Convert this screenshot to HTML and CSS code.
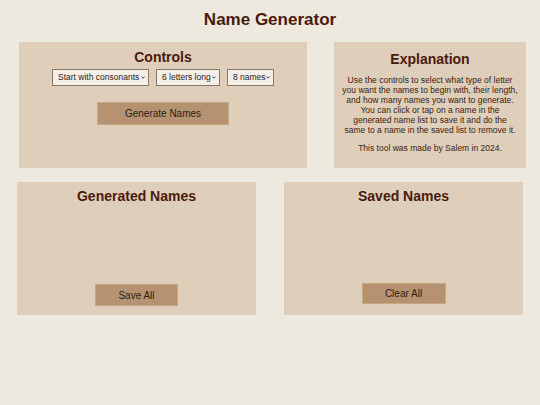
FILE: index.html
```html
<!DOCTYPE html>
<html lang="en">
<head>
<meta charset="utf-8">
<title>Name Generator</title>
<link rel="stylesheet" href="styles.css">
</head>
<body>
<h1 class="title">Name Generator</h1>
<div class="top-row">
  <section class="panel controls">
    <h2 class="panel-heading">Controls</h2>
    <div class="selects">
      <span class="sel-wrap">
        <select class="sel sel-type">
          <option>Start with consonants</option>
          <option>Start with vowels</option>
        </select>
        <svg class="chev" viewBox="0 0 4 3" aria-hidden="true"><path d="M0.4 0.5 L2 2.2 L3.6 0.5" fill="none" stroke="#3a2a1e" stroke-width="0.9"/></svg>
      </span>
      <span class="sel-wrap">
        <select class="sel sel-len">
          <option>6 letters long</option>
        </select>
        <svg class="chev" viewBox="0 0 4 3" aria-hidden="true"><path d="M0.4 0.5 L2 2.2 L3.6 0.5" fill="none" stroke="#3a2a1e" stroke-width="0.9"/></svg>
      </span>
      <span class="sel-wrap">
        <select class="sel sel-count">
          <option>8 names</option>
        </select>
        <svg class="chev" viewBox="0 0 4 3" aria-hidden="true"><path d="M0.4 0.5 L2 2.2 L3.6 0.5" fill="none" stroke="#3a2a1e" stroke-width="0.9"/></svg>
      </span>
    </div>
    <button class="btn btn-generate">Generate Names</button>
  </section>
  <section class="panel explanation">
    <h2 class="panel-heading expl-heading">Explanation</h2>
    <p class="expl-text">Use the controls to select what type of letter you want the names to begin with, their length, and how many names you want to generate. You can click or tap on a name in the generated name list to save it and do the same to a name in the saved list to remove it.</p>
    <p class="expl-text expl-credit">This tool was made by Salem in 2024.</p>
  </section>
</div>
<div class="bottom-row">
  <section class="panel list-panel">
    <h2 class="panel-heading">Generated Names</h2>
    <div class="name-list"></div>
    <button class="btn btn-save">Save All</button>
  </section>
  <section class="panel list-panel">
    <h2 class="panel-heading">Saved Names</h2>
    <div class="name-list"></div>
    <button class="btn btn-clear">Clear All</button>
  </section>
</div>
</body>
</html>
```
FILE: styles.css
```css
* { box-sizing: border-box; }

body {
  margin: 0;
  background: #ede9df;
  font-family: "Liberation Sans", Arial, sans-serif;
  color: #2b2118;
}

.title {
  margin: 0;
  padding-top: 10px;
  font-size: 17px;
  line-height: 20px;
  font-weight: bold;
  text-align: center;
  color: #4a1a0c;
}

.top-row {
  display: grid;
  grid-template-columns: 288px 192px;
  column-gap: 27px;
  margin: 12px 0 0 19px;
  height: 126px;
}

.bottom-row {
  display: grid;
  grid-template-columns: 239px 239px;
  column-gap: 28px;
  margin: 14px 0 0 17px;
  height: 133px;
}

.panel {
  background: #dfceb9;
  display: flex;
  flex-direction: column;
  align-items: center;
}

.panel-heading {
  margin: 0;
  font-size: 14px;
  line-height: 17px;
  font-weight: bold;
  color: #4a1a0c;
  text-align: center;
}

.controls { padding-top: 7px; }

.selects {
  display: flex;
  gap: 7px;
  margin-top: 3px;
}

.sel-wrap {
  position: relative;
  display: block;
  height: 17px;
}

.sel {
  -webkit-appearance: none;
  appearance: none;
  display: block;
  height: 17px;
  font-family: "Liberation Sans", Arial, sans-serif;
  font-size: 8.5px;
  line-height: 15px;
  color: #2b2118;
  background: #f4f0e9;
  border: 1px solid #8b7766;
  border-radius: 0;
  padding: 0 0 0 5px;
  margin: 0;
  outline: none;
}
.sel-type { width: 97px; }
.sel-len { width: 64px; }
.sel-count { width: 47px; }

.chev {
  position: absolute;
  right: 4px;
  top: 7px;
  width: 4px;
  height: 3px;
  pointer-events: none;
}

.btn {
  font-family: "Liberation Sans", Arial, sans-serif;
  font-size: 10px;
  color: #2b2118;
  background: #b69370;
  border: 1px solid #c6a784;
  border-radius: 0;
  padding: 0;
  cursor: pointer;
}

.btn-generate {
  width: 132px;
  height: 23px;
  margin-top: 16px;
}

.explanation { padding: 8.5px 8px 0; }

.expl-heading { margin-bottom: 7px; }

.expl-text {
  margin: 0;
  font-size: 8.5px;
  line-height: 10px;
  text-align: center;
  color: #3a1d12;
}

.expl-credit { margin-top: 8px; }

.list-panel { padding-top: 6px; }

.name-list { flex: 1; }

.btn-save {
  width: 83px;
  height: 22px;
  margin-bottom: 9px;
}

.btn-clear {
  width: 84px;
  height: 21px;
  margin-bottom: 11px;
}
```
